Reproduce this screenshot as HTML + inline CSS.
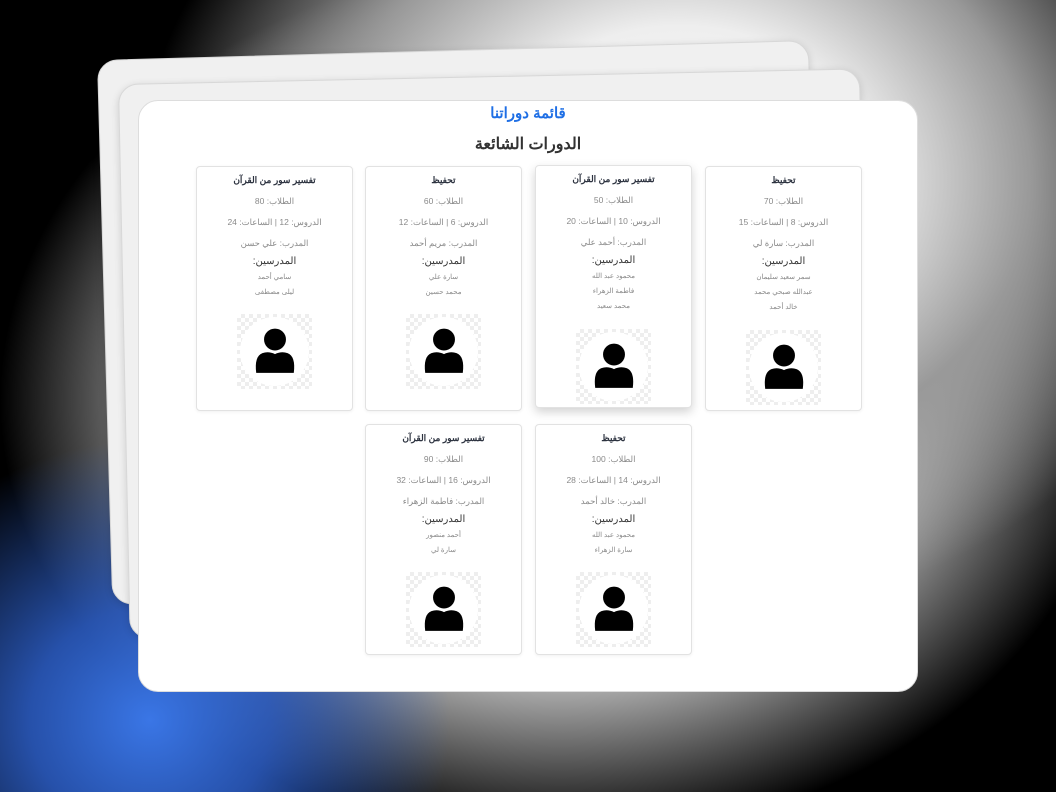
<!DOCTYPE html>
<html><head><meta charset="utf-8"><style>
*{margin:0;padding:0;box-sizing:border-box}
body{width:1056px;height:792px;overflow:hidden;position:relative;font-family:"Liberation Sans","Noto Sans CJK SC",sans-serif;
background:
radial-gradient(ellipse 300px 280px at 150px 720px,rgba(58,118,230,1) 0%,rgba(45,95,200,.85) 40%,rgba(20,40,90,0) 100%),
radial-gradient(ellipse 540px 440px at 680px 180px,#fff 0%,#eee 35%,#999 65%,rgba(0,0,0,0) 100%),
radial-gradient(ellipse 560px 440px at 560px 400px,#fff 0%,#e0e0e0 55%,rgba(0,0,0,0) 100%),
#000;}
.bk{position:absolute;background:#f0f0f0;border-radius:20px;border:1px solid #d8d8d8;box-shadow:0 2px 8px rgba(0,0,0,.15)}
.main{position:absolute;left:138px;top:100px;width:780px;height:592px;background:#fff;border-radius:20px;border:1px solid #ddd}
.t1{position:absolute;left:138px;width:780px;top:104px;text-align:center;color:#1f6fe5;font-weight:bold;font-size:15px}
.t2{position:absolute;left:138px;width:780px;top:134px;text-align:center;color:#333;font-weight:bold;font-size:16px}
.c{position:absolute;width:157px;background:#fff;border:1px solid #e2e2e2;border-radius:4px;text-align:center;direction:rtl;padding-top:3px;box-shadow:0 1px 3px rgba(0,0,0,.06)}
.c.h{box-shadow:0 4px 10px rgba(0,0,0,.18)}
.c .ti{height:21px;line-height:21px;font-size:9px;font-weight:bold;color:#2d3340}
.c .l{height:21px;line-height:21px;font-size:8.5px;color:#8a8a8a}
.c .lb{height:16px;line-height:16px;font-size:10px;color:#333}
.c .n{height:15px;line-height:15px;font-size:7px;color:#888}
.av{width:75px;height:75px;margin:14px auto 0;background-color:#fff;background-image:linear-gradient(45deg,#eee 25%,transparent 25%,transparent 75%,#eee 75%),linear-gradient(45deg,#eee 25%,transparent 25%,transparent 75%,#eee 75%);background-size:8px 8px;background-position:0 0,4px 4px;position:relative}
.av:before{content:"";position:absolute;left:3px;top:3px;width:69px;height:69px;border-radius:50%;background:#fff}
.av svg{position:absolute;left:17px;top:13px}
</style></head><body>
<div class="bk" style="left:97px;top:60px;width:712px;height:545px;transform:rotate(-1.6deg);transform-origin:0 0"></div>
<div class="bk" style="left:118px;top:84px;width:742px;height:555px;transform:rotate(-1.2deg);transform-origin:0 0"></div>
<div class="main"></div>
<div class="t1">قائمة دوراتنا</div>
<div class="t2">الدورات الشائعة</div>

<div class="c" style="left:705px;top:166px;height:245px"><div class="ti">تحفيظ</div><div class="l">الطلاب: 70</div><div class="l">الدروس: 8 | الساعات: 15</div><div class="l">المدرب: سارة لي</div><div class="lb">المدرسين:</div><div class="n">سمر سعيد سليمان</div><div class="n">عبدالله صبحي محمد</div><div class="n">خالد أحمد</div><div class="av" style="margin-top:15px"><svg width="42" height="48" viewBox="0 0 40 46"><path d="M2 44 Q0 28 8 25 Q14 23 20 26 Q26 23 32 25 Q40 28 38 44 Z"/><circle cx="20" cy="12" r="11.5" stroke="#fff" stroke-width="2"/></svg></div></div>

<div class="c h" style="left:535px;top:165px;height:243px"><div class="ti">تفسير سور من القرآن</div><div class="l">الطلاب: 50</div><div class="l">الدروس: 10 | الساعات: 20</div><div class="l">المدرب: أحمد علي</div><div class="lb">المدرسين:</div><div class="n">محمود عبد الله</div><div class="n">فاطمة الزهراء</div><div class="n">محمد سعيد</div><div class="av" style="margin-top:15px"><svg width="42" height="48" viewBox="0 0 40 46"><path d="M2 44 Q0 28 8 25 Q14 23 20 26 Q26 23 32 25 Q40 28 38 44 Z"/><circle cx="20" cy="12" r="11.5" stroke="#fff" stroke-width="2"/></svg></div></div>

<div class="c" style="left:365px;top:166px;height:245px"><div class="ti">تحفيظ</div><div class="l">الطلاب: 60</div><div class="l">الدروس: 6 | الساعات: 12</div><div class="l">المدرب: مريم أحمد</div><div class="lb">المدرسين:</div><div class="n">سارة علي</div><div class="n">محمد حسين</div><div class="av"><svg width="42" height="48" viewBox="0 0 40 46"><path d="M2 44 Q0 28 8 25 Q14 23 20 26 Q26 23 32 25 Q40 28 38 44 Z"/><circle cx="20" cy="12" r="11.5" stroke="#fff" stroke-width="2"/></svg></div></div>

<div class="c" style="left:196px;top:166px;height:245px"><div class="ti">تفسير سور من القرآن</div><div class="l">الطلاب: 80</div><div class="l">الدروس: 12 | الساعات: 24</div><div class="l">المدرب: علي حسن</div><div class="lb">المدرسين:</div><div class="n">سامي أحمد</div><div class="n">ليلى مصطفى</div><div class="av"><svg width="42" height="48" viewBox="0 0 40 46"><path d="M2 44 Q0 28 8 25 Q14 23 20 26 Q26 23 32 25 Q40 28 38 44 Z"/><circle cx="20" cy="12" r="11.5" stroke="#fff" stroke-width="2"/></svg></div></div>

<div class="c" style="left:535px;top:424px;height:231px"><div class="ti">تحفيظ</div><div class="l">الطلاب: 100</div><div class="l">الدروس: 14 | الساعات: 28</div><div class="l">المدرب: خالد أحمد</div><div class="lb">المدرسين:</div><div class="n">محمود عبد الله</div><div class="n">سارة الزهراء</div><div class="av"><svg width="42" height="48" viewBox="0 0 40 46"><path d="M2 44 Q0 28 8 25 Q14 23 20 26 Q26 23 32 25 Q40 28 38 44 Z"/><circle cx="20" cy="12" r="11.5" stroke="#fff" stroke-width="2"/></svg></div></div>

<div class="c" style="left:365px;top:424px;height:231px"><div class="ti">تفسير سور من القرآن</div><div class="l">الطلاب: 90</div><div class="l">الدروس: 16 | الساعات: 32</div><div class="l">المدرب: فاطمة الزهراء</div><div class="lb">المدرسين:</div><div class="n">أحمد منصور</div><div class="n">سارة لي</div><div class="av"><svg width="42" height="48" viewBox="0 0 40 46"><path d="M2 44 Q0 28 8 25 Q14 23 20 26 Q26 23 32 25 Q40 28 38 44 Z"/><circle cx="20" cy="12" r="11.5" stroke="#fff" stroke-width="2"/></svg></div></div>
</body></html>
